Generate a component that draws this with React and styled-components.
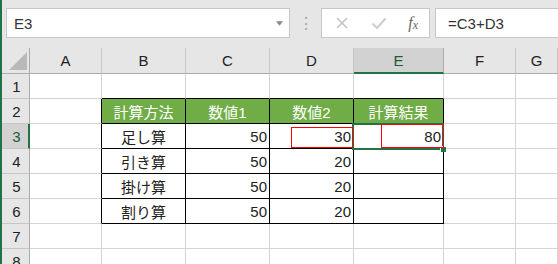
import React from 'react';
import styled, { createGlobalStyle } from 'styled-components';

const GREEN = '#217346';
const GRID = '#d4d4d4';
const HEAD_BG = '#e6e6e6';
const HEAD_SEL = '#d2d2d2';

const COLUMNS = [
  { id: 'A', width: '72px' },
  { id: 'B', width: '84px' },
  { id: 'C', width: '84px' },
  { id: 'D', width: '84px' },
  { id: 'E', width: '90px' },
  { id: 'F', width: '72px' },
  { id: 'G', width: '1fr' },
];

const TABLE_HEAD = ['計算方法', '数値1', '数値2', '計算結果'];
const TABLE_ROWS = [
  ['足し算', 50, 30, 80],
  ['引き算', 50, 20, ''],
  ['掛け算', 50, 20, ''],
  ['割り算', 50, 20, ''],
];

const GlobalStyle = createGlobalStyle`
  html, body {
    margin: 0;
    padding: 0;
    background: #fff;
    overflow: hidden;
  }
  body {
    font-family: "Liberation Sans", "Noto Sans CJK JP", sans-serif;
    color: #222;
  }
`;

// build cell descriptions for one grid row
const buildRow = rowNum => {
  const tableIndex = rowNum - 2; // 0 = header row
  const inTable = rowNum >= 2 && rowNum <= 6;

  return COLUMNS.map((col, i) => {
    const colInTable = i >= 1 && i <= 4;
    const cell = { key: col.id, right: GRID, bottom: GRID };

    if (inTable && colInTable) {
      cell.right = '#000';
      cell.bottom = '#000';
      if (tableIndex === 0) {
        cell.header = true;
        cell.text = TABLE_HEAD[i - 1];
        cell.align = 'center';
      } else {
        const value = TABLE_ROWS[tableIndex - 1][i - 1];
        cell.text = value;
        cell.align = i === 1 ? 'center' : 'right';
      }
    }
    if (inTable && i === 0) cell.right = '#000';
    if (rowNum === 1 && colInTable) cell.bottom = '#000';
    return cell;
  });
};

const App = () => {
  const rows = [1, 2, 3, 4, 5, 6, 7, 8];

  return (
    <>
      <GlobalStyle />
      <Window>
        <FormulaBar>
          <NameBox>
            <NameText>E3</NameText>
            <DropArrow viewBox="0 0 8 5">
              <polygon points="0,0 8,0 4,5" fill="#8a8a8a" />
            </DropArrow>
          </NameBox>
          <Grip>⋮</Grip>
          <ButtonsBox>
            <svg width="14" height="14" viewBox="0 0 14 14">
              <path d="M2 2 L12 12 M12 2 L2 12" stroke="#c4c4c4" strokeWidth="1.6" />
            </svg>
            <svg width="16" height="14" viewBox="0 0 16 14">
              <path d="M1.5 7.5 L6 12 L14.5 2.5" stroke="#cfcfcf" strokeWidth="2.2" fill="none" />
            </svg>
            <Fx>
              f<sub>x</sub>
            </Fx>
          </ButtonsBox>
          <FormulaInput>=C3+D3</FormulaInput>
        </FormulaBar>

        <Sheet>
          <Corner>
            <svg width="18" height="18" viewBox="0 0 18 18">
              <polygon points="18,0 18,18 0,18" fill="#b9b9b9" />
            </svg>
          </Corner>
          {COLUMNS.map(col => (
            <ColHeader key={col.id} $selected={col.id === 'E'}>
              {col.id}
            </ColHeader>
          ))}

          {rows.map(rowNum => (
            <React.Fragment key={rowNum}>
              <RowHeader $selected={rowNum === 3}>{rowNum}</RowHeader>
              {buildRow(rowNum).map(cell => (
                <Cell
                  key={cell.key}
                  $right={cell.right}
                  $bottom={cell.bottom}
                  $header={cell.header}
                  $align={cell.align}
                >
                  {cell.text}
                  {rowNum === 3 && cell.key === 'D' && <RedMark $variant="d" />}
                  {rowNum === 3 && cell.key === 'E' && (
                    <>
                      <Selection>
                        <FillHandle />
                      </Selection>
                      <RedMark $variant="e" />
                    </>
                  )}
                </Cell>
              ))}
            </React.Fragment>
          ))}
        </Sheet>
      </Window>
    </>
  );
};

const Window = styled.div`
  width: 558px;
  height: 264px;
  display: flex;
  flex-direction: column;
  border-left: 2px solid ${GREEN};
  box-sizing: border-box;
  overflow: hidden;
`;

const FormulaBar = styled.div`
  height: 48px;
  flex-shrink: 0;
  display: flex;
  align-items: center;
  padding: 0 0 2px 4px;
  box-sizing: border-box;
  background: ${HEAD_BG};
`;

const NameBox = styled.div`
  width: 284px;
  height: 30px;
  box-sizing: border-box;
  display: flex;
  align-items: center;
  justify-content: space-between;
  padding: 0 6px 0 7px;
  background: #fff;
  border: 1px solid #c6c6c6;
`;

const NameText = styled.span`
  font-size: 15px;
  color: #333;
`;

const DropArrow = styled.svg`
  width: 7px;
  height: 5px;
`;

const Grip = styled.span`
  width: 31px;
  text-align: center;
  font-size: 16px;
  color: #a6a6a6;
`;

const ButtonsBox = styled.div`
  width: 109px;
  height: 30px;
  box-sizing: border-box;
  display: flex;
  align-items: center;
  justify-content: space-between;
  padding: 0 11px 0 13px;
  background: #fff;
  border: 1px solid #c6c6c6;
`;

const Fx = styled.span`
  font-family: "Liberation Serif", "DejaVu Serif", serif;
  font-style: italic;
  font-size: 16px;
  color: #666;

  sub {
    font-size: 12px;
    vertical-align: -1px;
  }
`;

const FormulaInput = styled.div`
  flex: 1;
  height: 30px;
  margin-left: 5px;
  box-sizing: border-box;
  display: flex;
  align-items: center;
  padding-left: 12px;
  background: #fff;
  border: 1px solid #c6c6c6;
  border-right: none;
  font-size: 15px;
  color: #333;
`;

const Sheet = styled.div`
  display: grid;
  grid-template-columns: 28px ${COLUMNS.map(c => c.width).join(' ')};
  grid-template-rows: 26px;
  grid-auto-rows: 25px;
`;

const Corner = styled.div`
  background: ${HEAD_BG};
  border-right: 1px solid #ababab;
  border-bottom: 1px solid #ababab;
  display: flex;
  align-items: flex-end;
  justify-content: flex-end;
  padding: 0 2px 3px 0;
  box-sizing: border-box;
`;

const ColHeader = styled.div`
  background: ${p => (p.$selected ? HEAD_SEL : HEAD_BG)};
  border-right: 1px solid ${p => (p.$selected ? '#ababab' : '#c6c6c6')};
  border-bottom: ${p => (p.$selected ? `2px solid ${GREEN}` : '1px solid #ababab')};
  box-sizing: border-box;
  display: flex;
  align-items: center;
  justify-content: center;
  padding-top: ${p => (p.$selected ? '1px' : '0')};
  font-size: 15px;
  color: ${p => (p.$selected ? '#1d5a36' : '#222')};
`;

const RowHeader = styled.div`
  background: ${p => (p.$selected ? HEAD_SEL : HEAD_BG)};
  border-right: ${p => (p.$selected ? `2px solid ${GREEN}` : '1px solid #ababab')};
  border-bottom: 1px solid #c6c6c6;
  box-sizing: border-box;
  display: flex;
  align-items: center;
  justify-content: center;
  padding-left: ${p => (p.$selected ? '3px' : '2px')};
  font-size: 15px;
  color: ${p => (p.$selected ? '#1d5a36' : '#222')};
`;

const Cell = styled.div`
  position: relative;
  box-sizing: border-box;
  border-right: 1px solid ${p => p.$right};
  border-bottom: 1px solid ${p => p.$bottom};
  background: ${p => (p.$header ? '#70ad47' : 'transparent')};
  color: ${p => (p.$header ? '#fff' : '#222')};
  display: flex;
  align-items: center;
  justify-content: ${p =>
    p.$align === 'right' ? 'flex-end' : p.$align === 'center' ? 'center' : 'flex-start'};
  padding: 0 2px 0 2px;
  font-size: 15px;
  white-space: nowrap;
`;

const Selection = styled.div`
  position: absolute;
  top: -1px;
  left: -2px;
  right: -1px;
  bottom: -2px;
  border: 2px solid ${GREEN};
  pointer-events: none;
  z-index: 2;
`;

const FillHandle = styled.div`
  position: absolute;
  right: -4px;
  bottom: -4px;
  width: 5px;
  height: 5px;
  background: ${GREEN};
  border: 1px solid #fff;
  border-right: none;
  border-bottom: none;
`;

const RedMark = styled.div`
  position: absolute;
  border: 1px solid #ff0000;
  pointer-events: none;
  z-index: 3;
  top: ${p => (p.$variant === 'd' ? '3px' : '0')};
  left: ${p => (p.$variant === 'd' ? '21px' : '27px')};
  right: ${p => (p.$variant === 'd' ? '0' : '-1px')};
  bottom: ${p => (p.$variant === 'd' ? '0' : '0')};
`;

export default App;
